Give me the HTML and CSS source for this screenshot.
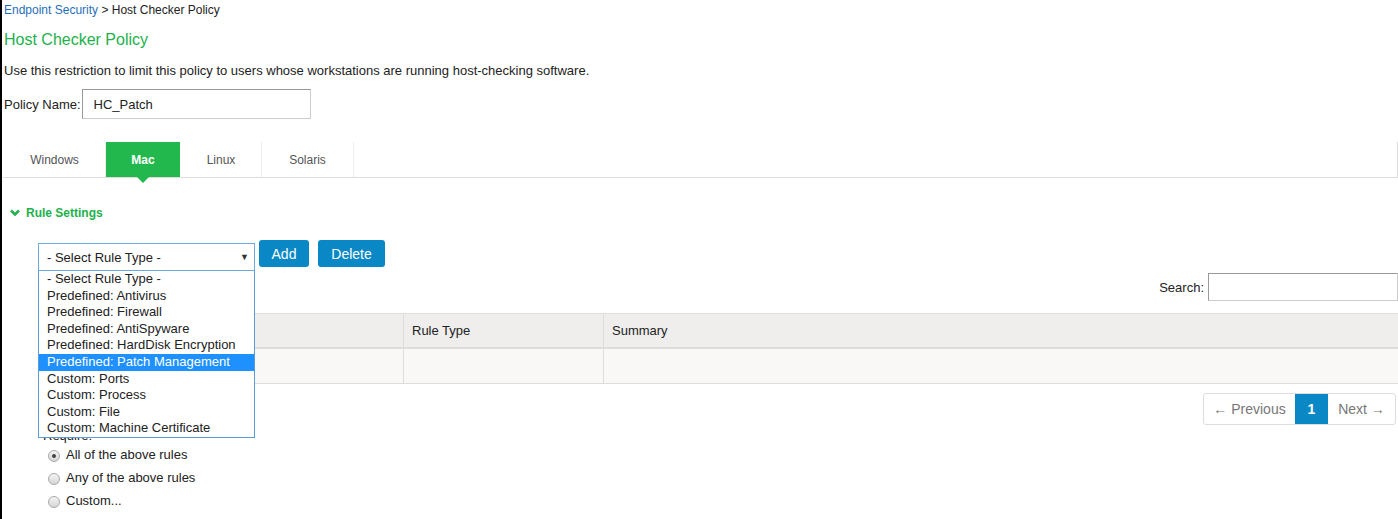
FILE: index.html
```html
<!DOCTYPE html>
<html lang="en">
<head>
  <meta charset="UTF-8" />
  <title>Host Checker Policy</title>
  <link rel="stylesheet" href="styles.css">
</head>
<body>
  <div class="page">
    <div class="breadcrumb"><a href="#">Endpoint Security</a> &gt; Host Checker Policy</div>
    <div class="title">Host Checker Policy</div>
    <div class="desc">Use this restriction to limit this policy to users whose workstations are running host-checking software.</div>

    <div class="policy-row">
      <label>Policy Name:</label>
      <input type="text" class="policy-input" value="HC_Patch" />
    </div>

    <div class="tabs">
      <div class="tab">Windows</div>
      <div class="tab active">Mac</div>
      <div class="tab">Linux</div>
      <div class="tab">Solaris</div>
    </div>

    <div class="section-head">
      <svg class="chev" width="10" height="8" viewBox="0 0 10 8"><path d="M1 1.5 L5 5.5 L9 1.5" fill="none" stroke="#22b14c" stroke-width="2.6"/></svg>
      Rule Settings
    </div>

    <div class="rules">
      <div class="controls">
        <div class="select-wrap">
          <div class="select-box">
            <span>- Select Rule Type -</span>
            <span class="caret">&#9660;</span>
          </div>
          <ul class="select-list">
            <li>- Select Rule Type -</li>
            <li>Predefined: Antivirus</li>
            <li>Predefined: Firewall</li>
            <li>Predefined: AntiSpyware</li>
            <li>Predefined: HardDisk Encryption</li>
            <li class="hl">Predefined: Patch Management</li>
            <li>Custom: Ports</li>
            <li>Custom: Process</li>
            <li>Custom: File</li>
            <li>Custom: Machine Certificate</li>
          </ul>
        </div>
        <button class="btn btn-add">Add</button>
        <button class="btn btn-del">Delete</button>
      </div>

      <div class="search-row">
        <label>Search:</label>
        <input type="text" class="search-input" />
      </div>

      <div class="grid">
        <div class="row head">
          <div class="cell c1"></div>
          <div class="cell c2">Rule Type</div>
          <div class="cell c3">Summary</div>
        </div>
        <div class="row body">
          <div class="cell c1"></div>
          <div class="cell c2"></div>
          <div class="cell c3"></div>
        </div>
      </div>

      <div class="pager-row">
        <div class="pager">
          <span class="pg prev">&larr; Previous</span>
          <span class="pg current">1</span>
          <span class="pg next">Next &rarr;</span>
        </div>
      </div>

      <div class="require">Require:</div>
      <div class="radios">
        <label class="radio"><span class="dot on"></span>All of the above rules</label>
        <label class="radio"><span class="dot"></span>Any of the above rules</label>
        <label class="radio"><span class="dot"></span>Custom...</label>
      </div>
    </div>
  </div>
</body>
</html>
```

FILE: styles.css
```css
html, body {
  margin: 0;
  height: 100%;
  background: #fff;
  font-family: "Liberation Sans", Arial, sans-serif;
  font-size: 12px;
  color: #222;
  overflow: hidden;
}
body { border-left: 2px solid #000; }
.page { padding-left: 2px; }

.breadcrumb {
  padding-top: 3px;
  line-height: 14px;
}
.breadcrumb a { color: #1f6fb8; text-decoration: none; }

.title {
  margin-top: 14px;
  font-size: 16px;
  line-height: 18px;
  color: #22b14c;
}
.desc {
  margin-top: 14px;
  font-size: 13px;
  line-height: 15px;
}

.policy-row {
  display: flex;
  align-items: center;
  margin-top: 11px;
}
.policy-row label { font-size: 13px; line-height: 15px; }
.policy-input {
  margin-left: 1px;
  width: 229px;
  height: 30px;
  box-sizing: border-box;
  border: 1px solid #ccc;
  border-top-color: #999;
  border-left-color: #999;
  padding: 0 11px;
  font: 13px "Liberation Sans", Arial, sans-serif;
  color: #222;
}

.tabs {
  display: flex;
  margin-top: 23px;
  margin-left: -1px;
  height: 35px;
  border-bottom: 1px solid #ddd;
  border-right: 1px solid #ddd;
}
.tab {
  position: relative;
  display: flex;
  align-items: center;
  justify-content: center;
  color: #555;
  border-right: 1px solid #eee;
}
.tab:nth-child(1) { width: 101px; margin-left: 1px; }
.tab:nth-child(2) { width: 74px; }
.tab:nth-child(3) { width: 80px; }
.tab:nth-child(4) { width: 91px; }
.tab.active {
  background: #22b84e;
  color: #fff;
  font-weight: bold;
  border-right: 1px solid #fff;
}
.tab.active::after {
  content: "";
  position: absolute;
  left: 50%;
  bottom: -6px;
  margin-left: -6px;
  border-left: 6px solid transparent;
  border-right: 6px solid transparent;
  border-top: 6px solid #22b84e;
}

.section-head {
  display: flex;
  align-items: center;
  gap: 6px;
  margin-top: 28px;
  margin-left: 6px;
  color: #22b14c;
  font-weight: bold;
  font-size: 12px;
  line-height: 14px;
}

.rules { padding-left: 34px; margin-top: 20px; }

.controls {
  display: flex;
  align-items: flex-start;
  height: 31px;
}
.select-wrap { position: relative; width: 217px; margin-top: 3px; }
.select-box {
  display: flex;
  justify-content: space-between;
  align-items: center;
  height: 28px;
  box-sizing: border-box;
  border: 1px solid #6fa8dc;
  padding: 0 5px 0 8px;
  font-size: 13px;
  color: #222;
  background: #fff;
}
.caret { font-size: 9px; color: #333; }
.select-list {
  position: absolute;
  top: 28px;
  left: 0;
  width: 217px;
  box-sizing: border-box;
  margin: 0;
  padding: 0;
  list-style: none;
  background: #fff;
  border: 1px solid #5a9bd8;
  border-top: none;
  z-index: 5;
}
.select-list li {
  height: 16.6px;
  line-height: 16.6px;
  padding-left: 8px;
  font-size: 13px;
  color: #222;
}
.select-list li.hl { background: #1e90ff; color: #fff; }

.btn {
  height: 27px;
  margin-left: 4px;
  border: none;
  border-radius: 3px;
  background: #0a88c6;
  color: #fff;
  font: 14px "Liberation Sans", Arial, sans-serif;
}
.btn-add { width: 50px; padding: 0; }
.btn-del { margin-left: 9px; width: 67px; padding: 0; }

.search-row {
  display: flex;
  justify-content: flex-end;
  align-items: center;
  height: 28px;
  margin-top: 2px;
}
.search-row label { margin-right: 4px; font-size: 13px; }
.search-input {
  width: 190px;
  height: 28px;
  box-sizing: border-box;
  border: 1px solid #ccc;
  border-top-color: #999;
  border-left-color: #999;
}

.grid {
  margin-top: 12px;
  border-top: 1px solid #ddd;
}
.row { display: flex; }
.row.head { background: #efeeed; height: 33px; border-bottom: 2px solid #ddd; }
.row.body { background: #f9f8f7; height: 34px; border-bottom: 1px solid #ddd; }
.cell {
  display: flex;
  align-items: center;
  padding-left: 8px;
  box-sizing: border-box;
  font-size: 13px;
  color: #222;
}
.c1 { width: 365px; }
.c2 { width: 200px; border-left: 1px solid #ddd; }
.c3 { flex: 1; border-left: 1px solid #ddd; }

.pager-row {
  display: flex;
  justify-content: flex-end;
  margin-top: 9px;
  padding-right: 2px;
}
.pager {
  display: flex;
  height: 32px;
  box-sizing: border-box;
  border: 1px solid #ddd;
  border-radius: 3px;
  overflow: hidden;
}
.pg {
  display: flex;
  align-items: center;
  justify-content: center;
  white-space: nowrap;
  font-size: 14px;
  color: #777;
  box-sizing: border-box;
}
.pg.prev { width: 91px; }
.pg.next { width: 67px; }
.pg.current {
  width: 33px;
  background: #0a88c6;
  color: #fff;
  font-weight: bold;
}

.require {
  margin-top: 3px;
  margin-left: 5px;
  font-size: 13px;
  line-height: 15px;
}
.radios { margin-left: 10px; }
.radio {
  display: flex;
  align-items: center;
  height: 23px;
  font-size: 13px;
  color: #222;
}
.dot {
  width: 12px;
  height: 12px;
  margin: 3px 6px 0 0;
  border: 1px solid #aaa;
  border-radius: 50%;
  background: linear-gradient(#f4f4f4, #d6d6d6);
  box-sizing: border-box;
  position: relative;
}
.dot.on::after {
  content: "";
  position: absolute;
  left: 3px;
  top: 3px;
  width: 4px;
  height: 4px;
  border-radius: 50%;
  background: #444;
}
```
